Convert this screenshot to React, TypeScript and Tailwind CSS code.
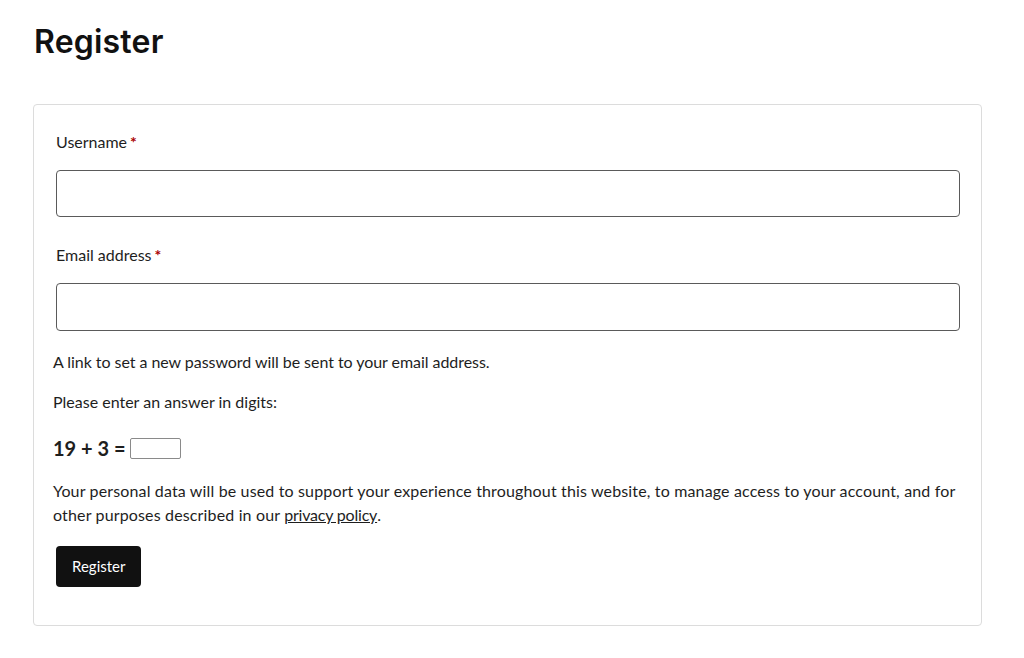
export default function App() {
  return (
    <div className="min-h-[658px] bg-white text-[#1e1e1e]" style={{ fontFamily: "Lato, 'Noto Sans', sans-serif" }}>
      <div className="pl-[33px] pr-[42px] pt-[22px]">
        <h1 className="text-[32px] leading-[40px] font-semibold tracking-[0.2px] pl-[1px] text-[#111]" style={{ fontFamily: "Inter, 'Noto Sans', sans-serif" }}>
          Register
        </h1>
        <form className="mt-[42px] border border-[#dcdcdc] rounded-[4px] pl-[19px] pr-[16px] pt-[25px] pb-[38px]">
          <label className="block pl-[3px] text-[16px] leading-[24px]">
            Username<span className="text-[#a00] ml-[3px] font-bold">*</span>
          </label>
          <input className="block mt-[16px] ml-[3px] w-[904px] h-[47px] border border-[#5a5a5a] rounded-[4px]" />
          <label className="block mt-[26px] pl-[3px] text-[16px] leading-[24px]">
            Email address<span className="text-[#a00] ml-[3px] font-bold">*</span>
          </label>
          <input className="block mt-[16px] ml-[3px] w-[904px] h-[48px] border border-[#5a5a5a] rounded-[4px]" />
          <p className="mt-[19px] text-[16px] leading-[24px] tracking-[-0.05px]">A link to set a new password will be sent to your email address.</p>
          <p className="mt-[16px] text-[16px] leading-[24px]">Please enter an answer in digits:</p>
          <div className="mt-[20px] flex items-center text-[20px] leading-[28px] font-bold">
            <span>19 + 3 =</span>
            <input className="ml-[4px] w-[51px] h-[21px] border border-[#8a8a8a] rounded-[2px]" />
          </div>
          <p className="mt-[17px] text-[16px] leading-[24px] tracking-[0.15px]">
            Your personal data will be used to support your experience throughout this website, to manage access to your account, and for other purposes described in our <a className="underline tracking-[-0.2px]">privacy policy</a>.
          </p>
          <button type="button" className="mt-[19px] ml-[3px] block h-[41px] px-[16px] bg-[#111] text-white text-[15px] rounded-[4px]">
            Register
          </button>
        </form>
      </div>
    </div>
  );
}
